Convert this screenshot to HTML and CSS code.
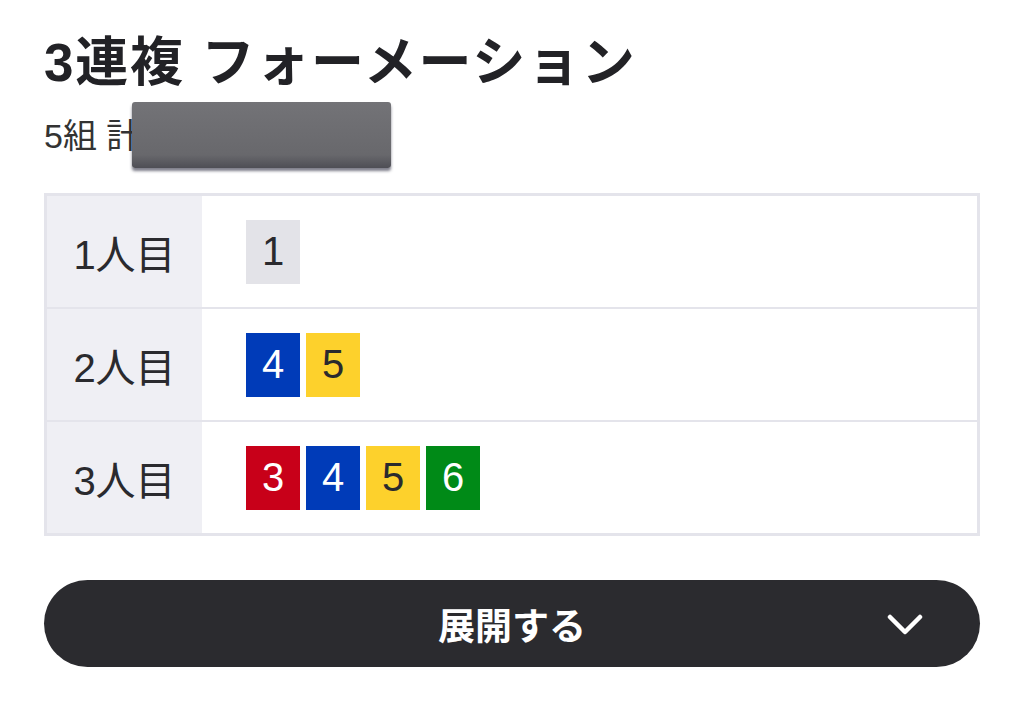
FILE: index.html
```html
<!DOCTYPE html>
<html lang="ja">
<head>
    <meta charset="UTF-8">
    <meta name="viewport" content="width=device-width, initial-scale=1.0">
    <title>3連複 フォーメーション</title>
    <link rel="stylesheet" href="styles.css">
</head>
<body>
    <div class="container">
        <h1 class="title">3連複 フォーメーション</h1>
        <div class="summary">
            <span class="summary-text">5組 計</span>
            <span class="redacted"></span>
        </div>

        <div class="formation">
            <div class="row">
                <div class="row-label">1人目</div>
                <div class="row-body">
                    <span class="boat boat-1">1</span>
                </div>
            </div>
            <div class="row">
                <div class="row-label">2人目</div>
                <div class="row-body">
                    <span class="boat boat-4">4</span>
                    <span class="boat boat-5">5</span>
                </div>
            </div>
            <div class="row">
                <div class="row-label">3人目</div>
                <div class="row-body">
                    <span class="boat boat-3">3</span>
                    <span class="boat boat-4">4</span>
                    <span class="boat boat-5">5</span>
                    <span class="boat boat-6">6</span>
                </div>
            </div>
        </div>

        <button class="expand-btn">
            <span class="expand-label">展開する</span>
            <svg class="chevron" width="36" height="24" viewBox="0 0 36 24">
                <path d="M3 4 L18 19 L33 4" fill="none" stroke="#fff" stroke-width="4.5" stroke-linecap="round" stroke-linejoin="round"/>
            </svg>
        </button>
    </div>
</body>
</html>
```

FILE: styles.css
```css
* {
    margin: 0;
    padding: 0;
    box-sizing: border-box;
}

body {
    font-family: 'Liberation Sans', 'Noto Sans CJK JP', sans-serif;
    background: #fff;
    color: #2a2a2e;
}

.container {
    padding: 28px 44px 0;
}

.title {
    font-size: 53px;
    font-weight: 700;
    line-height: 70px;
    letter-spacing: 1.8px;
    color: #222226;
}

.summary {
    display: flex;
    align-items: center;
    height: 70px;
    margin-bottom: 25px;
}

.summary-text {
    font-size: 34px;
    color: #333;
}

.redacted {
    display: inline-block;
    width: 259px;
    height: 66px;
    margin-left: -8px;
    margin-top: 4px;
    background: linear-gradient(180deg, #737377 0%, #68686c 80%, #4e4e55 100%);
    border-radius: 3px;
    box-shadow: 0 3px 3px rgba(40, 40, 60, 0.6);
}

.formation {
    border: 3px solid #e4e4eb;
}

.row {
    display: flex;
    height: 113px;
    border-top: 2px solid #e4e4eb;
}

.row:first-child {
    height: 111px;
    border-top: none;
}

.row-label {
    width: 155px;
    background: #efeff4;
    display: flex;
    align-items: center;
    justify-content: center;
    font-size: 40px;
    color: #2a2a2e;
}

.row-body {
    flex: 1;
    display: flex;
    align-items: center;
    gap: 6px;
    padding-left: 44px;
}

.boat {
    width: 54px;
    height: 64px;
    display: flex;
    align-items: center;
    justify-content: center;
    font-size: 40px;
}

.boat-1 {
    background: #e3e3e8;
    color: #2a2a2e;
}

.boat-3 {
    background: #c80019;
    color: #fff;
}

.boat-4 {
    background: #003bb8;
    color: #fff;
}

.boat-5 {
    background: #fdd12c;
    color: #2a2a2e;
}

.boat-6 {
    background: #008a17;
    color: #fff;
}

.expand-btn {
    margin-top: 44px;
    width: 100%;
    height: 87px;
    border: none;
    border-radius: 44px;
    background: #2b2b2f;
    color: #fff;
    display: flex;
    align-items: center;
    justify-content: center;
    position: relative;
    font-family: inherit;
    cursor: pointer;
}

.expand-label {
    font-size: 37px;
    font-weight: 700;
}

.chevron {
    position: absolute;
    right: 57px;
    top: 33px;
}
```
